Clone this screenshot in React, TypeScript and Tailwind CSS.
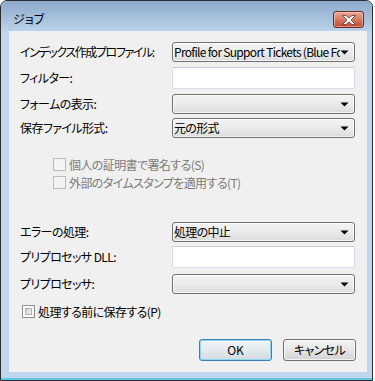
import React from "react";

const font = "[font-family:'Noto_Sans_CJK_JP','Noto_Sans',sans-serif] [font-feature-settings:'palt']";

function Arrow() {
  return (
    <svg width="9" height="5" viewBox="0 0 9 5" className="shrink-0">
      <polygon points="0.5,0.5 8.5,0.5 4.5,4.5" fill="#000" />
    </svg>
  );
}

function Combo({ text }: { text?: string }) {
  return (
    <div className="w-[183px] h-[20px] rounded-[3px] border border-[#707070] bg-gradient-to-b from-[#f3f3f3] via-[#ebebeb] to-[#dcdcdc] flex items-center pl-[1px] pr-[5px] shadow-[inset_0_0_0_1px_rgba(255,255,255,0.7)]">
      <div className="flex-1 overflow-hidden whitespace-nowrap text-[12px] leading-[16px] tracking-[-0.7px] text-black">{text ?? ""}</div>
      <Arrow />
    </div>
  );
}

function TextBox() {
  return (
    <div className="w-[183px] h-[22px] rounded-[2px] border border-[#d9dce2] border-t-[#c9ccd3] bg-white" />
  );
}

function Row({ label, children, h, mt, tr }: { label: string; children: React.ReactNode; h: string; mt: string; tr?: string }) {
  return (
    <div className={`flex items-center ${h} ${mt} pl-[11px]`}>
      <div className={`w-[152px] text-[12px] leading-[16px] text-black whitespace-nowrap ${tr ?? "tracking-[-0.6px]"}`}>{label}</div>
      {children}
    </div>
  );
}

function DisabledCheck({ label, mt }: { label: string; mt: string }) {
  return (
    <div className={`flex items-center h-[13px] ${mt} pl-[44px] gap-[3px]`}>
      <div className="w-[13px] h-[13px] border border-[#bcbcbc] bg-[#f4f4f4] shrink-0" />
      <div className="text-[12px] leading-[16px] tracking-[-0.6px] text-[#7a7a7a] whitespace-nowrap">{label}</div>
    </div>
  );
}

export default function App() {
  return (
    <div className={`w-[375px] h-[381px] bg-white overflow-hidden ${font}`}>
      <div className="w-[373px] h-[381px] border border-[#2e2e2e] rounded-t-[7px] overflow-hidden flex flex-col bg-[#bfd6ee]">
        {/* Title bar */}
        <div className="h-[30px] shrink-0 flex items-start bg-gradient-to-b from-[#8eaacb] to-[#bad2ea] pl-[12px] pr-[8px]">
          <div className="mt-[10px] text-[12px] leading-[16px] text-black">ジョブ</div>
          <div className="ml-auto mt-[10px] w-[31px] h-[17px] rounded-[3px] border border-[#6b2c20] bg-gradient-to-b from-[#e8a895] via-[#d67c66] to-[#c0432a] flex items-center justify-center shadow-[inset_0_0_0_1px_rgba(255,220,210,0.5)]">
            <svg width="14" height="10" viewBox="0 0 14 10">
              <polygon
                points="0.5,0.5 4,0.5 7,3.2 10,0.5 13.5,0.5 9,5 13.5,9.5 10,9.5 7,6.8 4,9.5 0.5,9.5 5,5"
                fill="#ffffff"
                stroke="#5c3b35"
                strokeWidth="0.8"
                strokeLinejoin="round"
              />
            </svg>
          </div>
        </div>
        {/* Body */}
        <div className="flex pl-[8px] pr-[5px] h-[341px] shrink-0">
          <div className="flex-1 bg-[#f0f0f0] flex flex-col">
            <Row label="インデックス作成プロファイル:" h="h-[20px]" mt="mt-[11px]" tr="tracking-[-1.4px]">
              <Combo text="Profile for Support Tickets (Blue Form)" />
            </Row>
            <Row label="フィルター:" h="h-[22px]" mt="mt-[5px]">
              <TextBox />
            </Row>
            <Row label="フォームの表示:" h="h-[20px]" mt="mt-[5px]">
              <Combo />
            </Row>
            <Row label="保存ファイル形式:" h="h-[20px]" mt="mt-[4px]">
              <Combo text="元の形式" />
            </Row>
            <DisabledCheck label="個人の証明書で署名する(S)" mt="mt-[20px]" />
            <DisabledCheck label="外部のタイムスタンプを適用する(T)" mt="mt-[5px]" />
            <Row label="エラーの処理:" h="h-[20px]" mt="mt-[33px]">
              <Combo text="処理の中止" />
            </Row>
            <Row label="プリプロセッサ DLL:" h="h-[22px]" mt="mt-[4px]">
              <TextBox />
            </Row>
            <Row label="プリプロセッサ:" h="h-[20px]" mt="mt-[6px]">
              <Combo />
            </Row>
            <div className="flex items-center h-[13px] mt-[11px] pl-[13px] gap-[3px]">
              <div className="w-[13px] h-[13px] border border-[#8e8f8f] bg-white p-[2px] shrink-0">
                <div className="w-full h-full bg-gradient-to-br from-[#cbcfd5] to-[#f6f6f6] border border-[#aeb3b9]" />
              </div>
              <div className="text-[12px] leading-[16px] tracking-[-0.6px] text-black whitespace-nowrap">処理する前に保存する(P)</div>
            </div>
            <div className="flex justify-end gap-[11px] pr-[11px] mt-[21px]">
              <div className="w-[73px] h-[22px] rounded-[3px] border border-[#3c7fb1] bg-gradient-to-b from-[#f0f4f7] via-[#e4eaee] to-[#d3dbe1] shadow-[inset_0_0_0_1px_#8fd6f2] flex items-center justify-center text-[12px] text-black">
                OK
              </div>
              <div className="w-[73px] h-[22px] rounded-[3px] border border-[#707070] bg-gradient-to-b from-[#f2f2f2] via-[#e6e6e6] to-[#d3d3d3] shadow-[inset_0_0_0_1px_rgba(255,255,255,0.7)] flex items-center justify-center text-[12px] tracking-[-0.6px] text-black">
                キャンセル
              </div>
            </div>
          </div>
        </div>
        <div className="h-[6px] shrink-0 bg-[#bfd6ee]" />
        <div className="h-[2px] shrink-0 bg-[#5ec8e6]" />
      </div>
    </div>
  );
}
